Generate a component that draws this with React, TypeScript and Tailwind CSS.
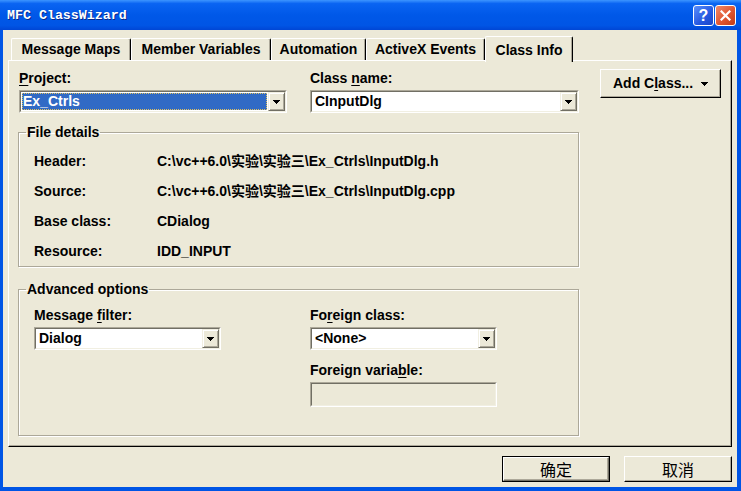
import type { ReactNode } from "react";

const sans = "font-['Liberation_Sans',Arial,sans-serif]";

function U({ children }: { children: ReactNode }) {
  return <span className="underline underline-offset-[2px] decoration-1">{children}</span>;
}

function Tri() {
  return (
    <svg width="7" height="4" viewBox="0 0 7 4" shapeRendering="crispEdges">
      <path d="M0 0h7v1h-1v1h-1v1h-1v1h-1v-1h-1v-1h-1v-1h-1z" fill="#000" />
    </svg>
  );
}

function DropBtn() {
  return (
    <div className="flex w-[17px] items-center justify-center border border-[#f1efe2] border-b-[#716f64] border-r-[#716f64] bg-[#ece9d8] shadow-[inset_1px_1px_0_#fff,inset_-1px_-1px_0_#aca899]">
      <Tri />
    </div>
  );
}

interface comboProps {
  value: string;
  className: string;
  selected?: boolean;
}

function Combo({ value, className, selected }: comboProps) {
  return (
    <div className={`flex h-[23px] border border-[#aca899] border-b-white border-r-white ${className}`}>
      <div className="flex flex-1 border border-[#716f64] border-b-[#f1efe2] border-r-[#f1efe2] bg-white">
        <div className="flex flex-1 p-[1px]">
          {selected ? (
            <div className="flex flex-1 items-center bg-[#316ac5] pl-[1px] text-white outline-1 outline-dotted -outline-offset-1 outline-[#e0c060]">
              {value}
            </div>
          ) : (
            <div className="flex flex-1 items-center pl-[2px]">{value}</div>
          )}
        </div>
        <DropBtn />
      </div>
    </div>
  );
}

function Tab({ label, className, active }: { label: string; className: string; active?: boolean }) {
  if (active) {
    return (
      <div
        className={`relative z-10 -mb-[2px] flex h-[26px] items-start justify-center rounded-t-[2px] border-l border-t border-r border-white border-r-black bg-[#ece9d8] pt-[3px] shadow-[inset_-1px_0_0_#aca899] ${className}`}
      >
        {label}
      </div>
    );
  }
  return (
    <div
      className={`flex h-[22px] items-center justify-center rounded-t-[2px] border-l border-t border-r border-white border-r-black shadow-[inset_-1px_0_0_#aca899] ${className}`}
    >
      {label}
    </div>
  );
}

function Row({ label, value }: { label: string; value: string }) {
  return (
    <div className="flex h-[30px] items-center">
      <span className="w-[123px]">{label}</span>
      <span className="font-['Liberation_Sans','Noto_Sans_CJK_SC',sans-serif]">{value}</span>
    </div>
  );
}

function Group({ title, className, children }: { title: string; className: string; children: ReactNode }) {
  return (
    <fieldset className={`border border-[#aca899] p-0 shadow-[1px_1px_0_#fff,inset_1px_1px_0_#fff] ${className}`}>
      <legend className="ml-[7px] px-[1px] leading-[16px]">{title}</legend>
      {children}
    </fieldset>
  );
}

export default function App() {
  return (
    <div className={`flex h-[491px] w-[741px] flex-col bg-[#0055e5] text-[14px] font-bold text-black ${sans}`}>
      {/* title bar */}
      <div className="flex h-[30px] items-center bg-[linear-gradient(to_bottom,#3d95ff_0%,#0a64f2_12%,#0058e8_50%,#0055e5_85%,#0046d5_100%)] pl-[7px] pr-[5px]">
        <span className="mt-[2px] flex-1 font-['Liberation_Mono',monospace] text-[13.3px] text-white [text-shadow:1px_1px_0_#0a2a8a]">
          MFC ClassWizard
        </span>
        <div className="mt-[1px] flex gap-[1px]">
          <div className="flex h-[21px] w-[21px] items-center justify-center rounded-[3px] border border-white bg-[linear-gradient(135deg,#5b8ffb,#2457e0_60%,#1b45c8)] text-[16px] leading-none text-white">
            ?
          </div>
          <div className="flex h-[21px] w-[21px] items-center justify-center rounded-[3px] border border-white bg-[linear-gradient(135deg,#f08a6a,#e05530_55%,#c23c18)]">
            <svg width="11" height="11" viewBox="0 0 11 11">
              <path d="M1.5 1.5l8 8M9.5 1.5l-8 8" stroke="#fff" strokeWidth="2.2" strokeLinecap="square" />
            </svg>
          </div>
        </div>
      </div>

      {/* client area */}
      <div className="mb-[4px] ml-[3px] mr-[4px] flex flex-1 flex-col bg-[#ece9d8] px-[5px] pt-[6px]">
        <div className="flex h-[24px] items-end pl-[3px]">
          <Tab label="Message Maps" className="w-[120px]" />
          <Tab label="Member Variables" className="w-[140px]" />
          <Tab label="Automation" className="w-[95px]" />
          <Tab label="ActiveX Events" className="w-[119px]" />
          <Tab label="Class Info" className="w-[88px]" active />
        </div>

        <div className="flex h-[387px] border border-white border-b-black border-r-black pl-[9px] pt-[9px] shadow-[inset_-1px_-1px_0_#aca899]">
          <div className="flex w-[561px] flex-col">
            <div className="flex pl-[1px]">
              <div className="flex w-[291px] flex-col gap-[4px]">
                <span className="leading-[16px]">
                  <U>P</U>roject:
                </span>
                <Combo value="Ex_Ctrls" className="w-[268px]" selected />
              </div>
              <div className="flex flex-col gap-[4px]">
                <span className="leading-[16px]">
                  Class <U>n</U>ame:
                </span>
                <Combo value="CInputDlg" className="w-[269px]" />
              </div>
            </div>

            <Group title="File details" className="mt-[11px] h-[143px]">
              <div className="pl-[15px] pt-[6px]">
                <Row label="Header:" value="C:\vc++6.0\实验\实验三\Ex_Ctrls\InputDlg.h" />
                <Row label="Source:" value="C:\vc++6.0\实验\实验三\Ex_Ctrls\InputDlg.cpp" />
                <Row label="Base class:" value="CDialog" />
                <Row label="Resource:" value="IDD_INPUT" />
              </div>
            </Group>

            <Group title="Advanced options" className="mt-[14px] h-[155px]">
              <div className="flex pl-[15px] pt-[10px]">
                <div className="flex w-[276px] flex-col gap-[4px]">
                  <span className="leading-[16px]">
                    Message <U>f</U>ilter:
                  </span>
                  <Combo value="Dialog" className="w-[187px]" />
                </div>
                <div className="flex flex-col gap-[4px]">
                  <span className="leading-[16px]">
                    Fo<U>r</U>eign class:
                  </span>
                  <Combo value="<None>" className="w-[187px]" />
                  <span className="mt-[8px] leading-[16px]">
                    Foreign varia<U>b</U>le:
                  </span>
                  <div className="h-[25px] w-[187px] border border-[#aca899] border-b-white border-r-white">
                    <div className="h-full border border-[#716f64] border-b-[#f1efe2] border-r-[#f1efe2] bg-[#ece9d8]" />
                  </div>
                </div>
              </div>
            </Group>
          </div>

          <div className="ml-[21px] -mt-[1px]">
            <div className="flex h-[29px] w-[121px] items-center border border-white border-b-black border-r-black pl-[12px] pr-[12px] shadow-[inset_-1px_-1px_0_#aca899]">
              <span className="flex-1">
                Add C<U>l</U>ass...
              </span>
              <Tri />
            </div>
          </div>
        </div>

        <div className="mt-[9px] flex justify-end gap-[14px] font-['Noto_Sans_CJK_SC',sans-serif] text-[16px] font-normal">
          <div className="h-[26px] w-[108px] border border-black">
            <div className="flex h-full items-center justify-center border border-white border-b-[#716f64] border-r-[#716f64] shadow-[inset_-1px_-1px_0_#aca899]">
              确定
            </div>
          </div>
          <div className="flex h-[26px] w-[108px] items-center justify-center border border-white border-b-black border-r-black shadow-[inset_-1px_-1px_0_#aca899]">
            取消
          </div>
        </div>
      </div>
    </div>
  );
}
